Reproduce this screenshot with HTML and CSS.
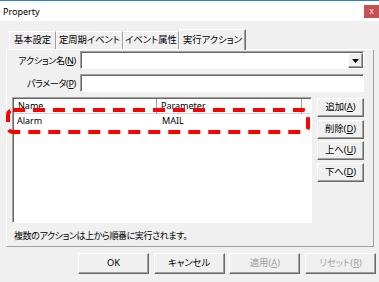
FILE: index.html
```html
<!DOCTYPE html>
<html lang="ja">
<head>
<meta charset="utf-8">
<title>Property</title>
<link rel="stylesheet" href="styles.css">
</head>
<body>
<div class="titlebar">
  <div class="title">Property</div>
  <div class="close">x</div>
</div>
<div class="tabs">
  <div class="tab w1">基本設定</div>
  <div class="tab w2">定周期イベント</div>
  <div class="tab w3">イベント属性</div>
  <div class="tab sel w4">実行アクション</div>
</div>
<div class="panel">
  <div class="field">
    <label class="lbl">アクション名(<u>N</u>)</label>
    <div class="combo"><div class="drop"><svg width="7" height="4" viewBox="0 0 7 4"><polygon points="0,0 7,0 3.5,4" fill="#000"/></svg></div></div>
  </div>
  <div class="field gap">
    <label class="lbl">パラメータ(<u>P</u>)</label>
    <div class="input"></div>
  </div>
  <div class="main">
    <div class="list">
      <div class="lv-head">
        <div class="hc c1">Name</div>
        <div class="hc c2">Parameter</div>
        <div class="hc fill"></div>
      </div>
      <div class="lv-row">
        <div class="rc c1">Alarm</div>
        <div class="rc c2">MAIL</div>
      </div>
    </div>
    <div class="side">
      <div class="btn sbtn">追加(<u>A</u>)</div>
      <div class="btn sbtn">削除(<u>D</u>)</div>
      <div class="btn sbtn">上へ(<u>U</u>)</div>
      <div class="btn sbtn">下へ(<u>D</u>)</div>
    </div>
  </div>
  <div class="info">複数のアクションは上から順番に実行されます。</div>
</div>
<div class="footer">
  <div class="btn fbtn">OK</div>
  <div class="btn fbtn">キャンセル</div>
  <div class="btn fbtn dis">適用(<u>A</u>)</div>
  <div class="btn fbtn dis">リセット(<u>R</u>)</div>
</div>
<svg class="highlight" width="304" height="26" viewBox="0 0 304 26"><rect x="2" y="2" width="300" height="22" rx="5" fill="none" stroke="#ff0000" stroke-width="4" stroke-dasharray="12 8"/></svg>
</body>
</html>
```
FILE: styles.css
```css
* { box-sizing: border-box; }
body {
  margin: 0;
  width: 379px;
  height: 282px;
  overflow: hidden;
  position: relative;
  background: #f0f0f0;
  color: #000;
  font-family: "Noto Sans", "Noto Sans CJK JP", sans-serif;
  font-feature-settings: "palt";
  font-size: 9px;
}
u { text-decoration: underline; text-underline-offset: 1px; }

.titlebar {
  height: 21px;
  background: #fff;
  border-top: 1px solid #2d7dd2;
  display: flex;
  justify-content: space-between;
  align-items: flex-start;
}
.title { padding: 1px 0 0 3px; line-height: 20px; font-size: 9px; }
.close {
  width: 15px;
  height: 13px;
  margin-top: 4px;
  background: #c75050;
  color: #fff;
  font-size: 8px;
  line-height: 12px;
  text-align: center;
}

.tabs {
  display: flex;
  align-items: flex-end;
  height: 20px;
  margin: 8px 0 0 9px;
}
.tab {
  height: 18px;
  line-height: 16px;
  text-align: center;
  font-size: 9.3px;
  background: #f0f0f0;
  border-top: 1px solid #fff;
  border-left: 1px solid #fff;
  border-right: 1px solid #a0a0a0;
}
.tab.sel {
  height: 21px;
  line-height: 19px;
  margin-bottom: -1px;
  position: relative;
  z-index: 1;
  border-right: 1px solid #696969;
  box-shadow: inset -1px 0 0 #a0a0a0;
}
.w1 { width: 47px; }
.w2 { width: 67px; }
.w3 { width: 56px; }
.w4 { width: 67px; }

.panel {
  margin-left: 6px;
  width: 368px;
  height: 198px;
  border: 1px solid;
  border-color: #fff #a0a0a0 #a0a0a0 #fff;
  padding: 1px 9px 0 5px;
  display: flex;
  flex-direction: column;
}
.field { display: flex; align-items: center; height: 18px; }
.field.gap { margin-top: 5px; }
.lbl {
  width: 65px;
  margin-right: 3px;
  text-align: right;
  padding-right: 1px;
  font-size: 9px;
  letter-spacing: -0.3px;
}
.combo, .input {
  flex: 1;
  height: 18px;
  background: #fff;
  border: 1px solid;
  border-color: #a0a0a0 #fff #fff #a0a0a0;
  box-shadow: inset 1px 1px 0 #696969;
}
.combo { display: flex; justify-content: flex-end; align-items: stretch; padding: 1px 0 0 0; }
.drop {
  width: 15px;
  background: #f0f0f0;
  border: 1px solid;
  border-color: #fff #696969 #696969 #fff;
  box-shadow: inset -1px -1px 0 #a0a0a0;
  display: flex;
  align-items: center;
  justify-content: center;
}

.main { display: flex; gap: 5px; margin-top: 5px; }
.list {
  width: 300px;
  height: 126px;
  background: #fff;
  border: 1px solid;
  border-color: #a0a0a0 #fff #fff #a0a0a0;
  box-shadow: inset 1px 1px 0 #696969;
  padding: 1px 0 0 1px;
}
.lv-head { display: flex; height: 15px; }
.hc {
  height: 15px;
  line-height: 13px;
  padding-left: 4px;
  background: #fff;
  border-right: 1px solid #a0a0a0;
  border-bottom: 1px solid #d5d5d5;
}
.hc.c1 { width: 143px; }
.hc.c2 { width: 145px; }
.hc.fill { flex: 1; border-right: none; }
.lv-row { display: flex; height: 14px; line-height: 14px; }
.rc { padding-left: 3px; }
.rc.c1 { width: 143px; }
.rc.c2 { width: 145px; padding-left: 5px; }

.side { display: flex; flex-direction: column; gap: 2.5px; margin-top: 1px; }
.btn {
  background: #f0f0f0;
  border: 1px solid;
  border-color: #fff #696969 #696969 #fff;
  box-shadow: inset -1px -1px 0 #a0a0a0;
  text-align: center;
  font-size: 9.3px;
}
.sbtn { width: 47px; height: 19px; line-height: 16px; }

.info { margin-top: 6px; line-height: 14px; padding-left: 2px; font-size: 9px; letter-spacing: -0.4px; }

.footer { display: flex; gap: 4.7px; margin: 6px 0 0 78px; }
.fbtn { width: 71px; height: 21px; line-height: 18px; }
.fbtn.dis { color: #a0a0a0; }

.highlight { position: absolute; left: 6px; top: 108px; }
```
